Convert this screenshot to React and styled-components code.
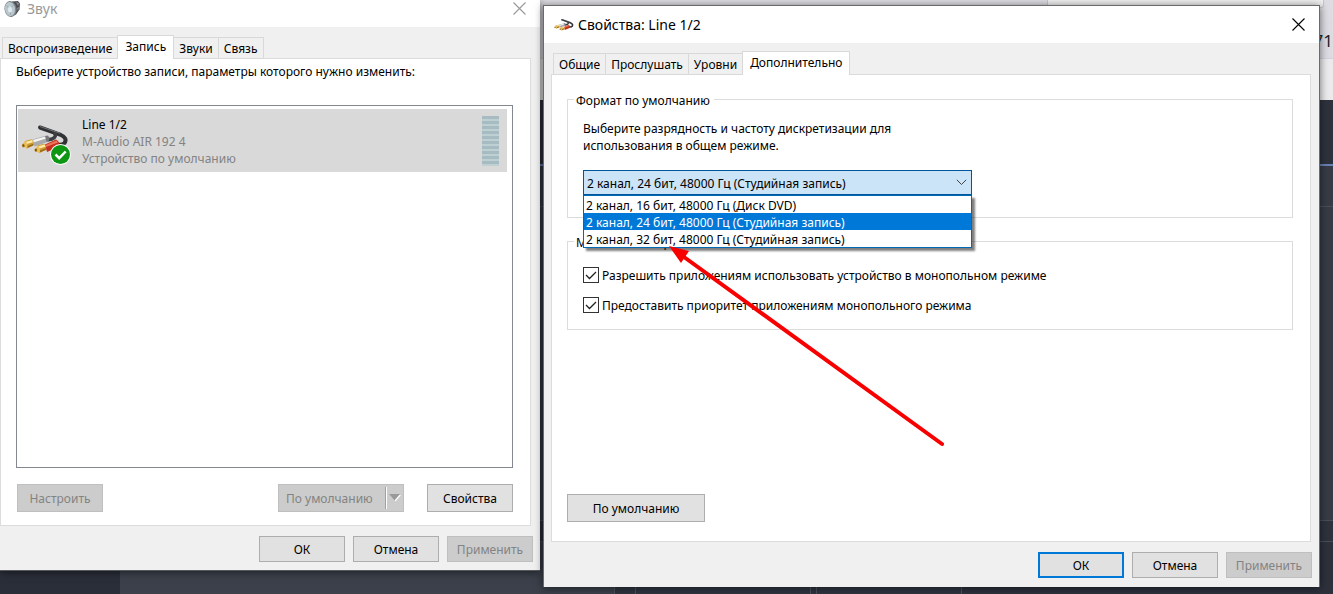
import React, { useState } from 'react';
import styled, { createGlobalStyle, css } from 'styled-components';

const GlobalStyle = createGlobalStyle`
  *, *::before, *::after { box-sizing: border-box; }
  body {
    margin: 0;
    font-family: "Noto Sans", "Open Sans", sans-serif;
    font-size: 12px;
    line-height: 17px;
    color: #000;
  }
  button, select, input { font: inherit; color: inherit; }
`;

const Desktop = styled.main`
  position: relative;
  display: flex;
  align-items: flex-start;
  gap: 3px;
  min-height: 100vh;
  padding-right: 13px;
  overflow: hidden;
`;

/* ---------- application behind the dialogs ---------- */

const Backdrop = styled.div`
  position: absolute;
  inset: 0;
  display: flex;
  flex-direction: column;
  background: #2e323d;
`;

const Strip = styled.div`
  flex: ${(p) => (p.$grow ? 1 : 'none')};
  height: ${(p) => p.$height}px;
  background: ${(p) => p.$color};
  border-bottom: ${(p) => (p.$line ? `1px solid ${p.$line}` : 'none')};
`;

const ToolStrip = styled(Strip)`
  display: flex;
  justify-content: flex-end;
  align-items: center;
  padding-top: 4px;
  font-size: 17px;
  color: #222;
`;

const SearchStrip = styled(Strip)`
  display: flex;
  justify-content: flex-end;
  padding-right: 9px;
`;

const SearchBox = styled.div`
  width: 277px;
  height: 8px;
  background: #f0f0f1;
  border: 1px solid #c8c7cd;
  border-top: 0;
  border-radius: 0 0 3px 3px;
`;

const BottomStrip = styled(Strip)`
  display: flex;
`;

const BottomCell = styled.div`
  flex: ${(p) => (p.$width ? `0 0 ${p.$width}px` : 1)};
  background: ${(p) => p.$color};
  border-right: ${(p) => (p.$width && p.$line ? '1px solid #4b505a' : 'none')};
`;

/* ---------- window frame ---------- */

const Window = styled.section`
  position: relative;
  display: flex;
  flex-direction: column;
  background: #f0f0f0;
  box-shadow: 0 1px 8px rgba(0, 0, 0, 0.55);
`;

const SoundWindow = styled(Window)`
  flex: 0 1 540px;
  min-height: calc(100vh - 23px);
  border-bottom: 1px solid #55585c;
`;

const PropertiesWindow = styled(Window)`
  flex: 1;
  margin-top: 5px;
  min-height: calc(100vh - 12px);
  border: 1px solid #6a6a6c;
  border-width: 1px 1px 0 1px;
`;

const TitleBar = styled.header`
  display: flex;
  align-items: center;
  height: ${(p) => (p.$clipped ? 27 : 37)}px;
  padding: ${(p) => (p.$clipped ? '0 14px 10px 4px' : '0 14px 0 10px')};
  gap: ${(p) => (p.$clipped ? 6 : 4)}px;
  background: #fff;
  color: ${(p) => (p.$clipped ? '#999' : '#000')};
`;

const Title = styled.h1`
  flex: 1;
  margin: 0;
  font-size: 14px;
  line-height: 18px;
  font-weight: 400;
`;

const CloseButton = styled.button`
  display: flex;
  padding: 0;
  border: 0;
  background: none;
  color: inherit;
`;

const TabList = styled.div`
  display: flex;
  align-items: flex-end;
  height: ${(p) => p.$height}px;
  padding-left: ${(p) => p.$inset}px;
`;

const Tab = styled.button`
  position: relative;
  height: 22px;
  margin-right: -1px;
  margin-bottom: -1px;
  padding: 0 5px;
  border: 1px solid #d9d9d9;
  background: #f0f0f0;
  white-space: nowrap;
  ${(p) =>
    p.$active &&
    css`
      z-index: 1;
      height: 24px;
      padding: 0 7px 3px;
      border-bottom: 0;
      background: #fff;
    `}
`;

const SoundPanel = styled.div`
  flex: 1;
  display: flex;
  flex-direction: column;
  margin-right: 9px;
  padding: 4px 17px 13px 15px;
  border: 1px solid #dcdcdc;
  background: #fff;
`;

const PropertiesPanel = styled.div`
  flex: 1;
  display: flex;
  flex-direction: column;
  align-items: stretch;
  gap: 14px;
  margin: 0 8px 0 7px;
  padding: 15px 17px 19px 15px;
  border: 1px solid #dcdcdc;
  background: #fff;
`;

const Text = styled.p`
  margin: 0;
`;

/* ---------- buttons ---------- */

const Button = styled.button`
  min-width: 86px;
  height: ${(p) => (p.$tall ? 28 : 26)}px;
  padding: 0 8px;
  border: ${(p) => (p.$primary ? '2px solid #0078d7' : '1px solid #adadad')};
  background: #e1e1e1;
  white-space: nowrap;
  &:disabled {
    border-color: #bfbfbf;
    background: #ccc;
    color: #838383;
  }
`;

const WideButton = styled(Button)`
  align-self: flex-start;
  width: 138px;
  margin-top: auto;
`;

const SplitButton = styled(Button)`
  display: flex;
  align-items: center;
  justify-content: space-between;
  width: 126px;
  margin-left: auto;
  padding: 0 2px 0 7px;
`;

const SplitArrow = styled.span`
  display: flex;
  align-items: center;
  height: 22px;
  padding-left: 2px;
  border-left: 1px solid #a0a0a0;
  box-shadow: inset 1px 0 #fff;
`;

const PanelActions = styled.div`
  display: flex;
  gap: 23px;
  margin-top: 16px;
  padding-left: 1px;
`;

const Footer = styled.footer`
  display: flex;
  justify-content: flex-end;
  gap: 8px;
  padding: 10px 7px ${(p) => p.$bottom}px;
`;

/* ---------- device list ---------- */

const DeviceList = styled.ul`
  flex: 1;
  margin: 25px 0 0;
  padding: 3px 5px 3px 1px;
  border: 1px solid #828790;
  list-style: none;
`;

const Device = styled.li`
  display: flex;
  align-items: center;
  height: 63px;
  padding: 0 8px 0 3px;
  background: #d9d9d9;
`;

const DeviceText = styled.div`
  flex: 1;
  padding: 2px 0 0 11px;
  color: #838383;
`;

const DeviceName = styled.div`
  color: #000;
`;

const Meter = styled.div`
  display: flex;
  flex-direction: column;
  width: 17px;
`;

const MeterBar = styled.span`
  height: 5px;
  background: #a6bcc2;
  border-bottom: 2px solid #bfd0d3;
`;

/* ---------- properties form ---------- */

const Group = styled.fieldset`
  min-width: 0;
  margin: 0;
  padding: ${(p) => p.$padding};
  border: 1px solid #dcdcdc;
`;

const Legend = styled.legend`
  margin-left: ${(p) => p.$inset}px;
  padding: 2px 4px 0 2px;
`;

const Hint = styled(Text)`
  max-width: 340px;
`;

const Combo = styled.div`
  position: relative;
  max-width: 389px;
  margin-top: 16px;
`;

const ComboSelect = styled.select`
  display: block;
  width: 100%;
  height: 25px;
  padding: 2px 24px 0 3px;
  border: 1px solid #00559b;
  border-radius: 0;
  background: #cce4f7;
  appearance: none;
  outline: 0;
`;

const ComboChevron = styled.svg`
  position: absolute;
  right: 5px;
  top: 9px;
  pointer-events: none;
`;

const Options = styled.ul`
  position: absolute;
  z-index: 2;
  top: 100%;
  left: 0;
  right: 0;
  margin: 0;
  padding: 0;
  border: 1px solid #0069b4;
  background: #fff;
  box-shadow: 3px 3px 2px rgba(0, 0, 0, 0.5);
  list-style: none;
`;

const Option = styled.li`
  padding: 2px 0 0 2px;
  line-height: 15px;
  background: ${(p) => (p.$selected ? '#0078d7' : '#fff')};
  color: ${(p) => (p.$selected ? '#fff' : '#000')};
`;

const CheckRow = styled.label`
  display: flex;
  align-items: flex-start;
  gap: 3px;
  height: 16px;
  line-height: 18px;
  & + & { margin-top: 14px; }
`;

const CheckMark = styled.span`
  display: grid;
`;

const CheckInput = styled.input`
  grid-area: 1 / 1;
  width: 16px;
  height: 16px;
  margin: 0;
  border: 1px solid #333;
  background: #fff;
  appearance: none;
  &:not(:checked) + svg { visibility: hidden; }
`;

const CheckIcon = styled.svg`
  grid-area: 1 / 1;
  pointer-events: none;
`;

const Pointer = styled.svg`
  position: absolute;
  z-index: 3;
  left: 120px;
  top: 234px;
  pointer-events: none;
`;

/* ---------- drawings ---------- */

function CloseIcon({ size }) {
  return (
    <svg width={size} height={size} viewBox="0 0 13 13" fill="none" stroke="currentColor" strokeWidth="1.1">
      <path d="M.5.5l12 12M12.5.5l-12 12" />
    </svg>
  );
}

function SpeakerIcon() {
  return (
    <svg width="17" height="18" viewBox="0 0 17 18">
      <path d="M8 1.500L14 1l2 2.500-.5 6-3.500 5-4 2z" fill="#4a4c50" />
      <path d="M12 2l3 1-1 3zM13 8l2-1-1 4z" fill="#8b8e92" />
      <ellipse cx="6.500" cy="9" rx="6" ry="8" fill="#7c858b" transform="rotate(-8 6.500 9)" />
      <ellipse cx="6" cy="9" rx="5" ry="7" fill="#b9c7ce" transform="rotate(-8 6 9)" />
      <path d="M2.500 6l3.500 3 .5 6M6 9l3.500-4" stroke="#98a6ae" fill="none" />
      <ellipse cx="6" cy="9.500" rx="2" ry="3" fill="#dfe9ed" />
    </svg>
  );
}

function Plug() {
  return (
    <>
      <path d="M1 7.500Q.5 5.500 2.500 5L5 4.500l1 3-3.500 1.500Q1.300 9 1 7.500z" fill="#c08a22" />
      <path d="M4 2.500L10.500.8Q13 3 12.500 7L6 10Q3 7 4 2.500z" fill="#cf9a2f" />
      <path d="M5 3.200l6-1.700 1 2.200-7 2z" fill="#ffe9a6" />
      <path d="M6 9.600l6.300-2.900.2-1.500L5.500 8z" fill="#946717" />
      <ellipse cx="4.800" cy="6.200" rx="1.500" ry="3.800" fill="#e9bf5c" transform="rotate(-12 4.800 6.200)" />
      <circle cx="2.400" cy="7" r="1" fill="#6e4c10" />
    </>
  );
}

function CablesDrawing() {
  return (
    <>
      <path d="M19 3.500L39 10.500Q47 14 43.500 19Q41.500 21.500 36 20.500" fill="none" stroke="#303234" strokeWidth="4" strokeLinecap="round" />
      <path d="M33 8.500Q36.500 12.500 31 15L26 16" fill="none" stroke="#3b3d40" strokeWidth="3.500" />
      <path d="M19 2.500L39 9.300" stroke="#6e7174" strokeWidth="1" fill="none" />
      <path d="M11.500 15.500L24.500 11.800Q28 14 26.500 18L13.500 22.500z" fill="#aaaaac" />
      <path d="M12 16l12.500-3.500 1.500 1.800-13 4z" fill="#f4f4f5" />
      <path d="M24 12l3-.5q2.500 3 .5 5.500l-2 1z" fill="#77797c" />
      <g transform="translate(0 14.500)"><Plug /></g>
      <path d="M24 20.500L35 15.500Q39.500 17.500 37.500 23L26 28z" fill="#c4301b" />
      <path d="M24.500 21l11-4.500 1.500 2L25 23z" fill="#ee7259" />
      <g transform="translate(12.500 19)"><Plug /></g>
    </>
  );
}

function DeviceIcon() {
  return (
    <svg width="50" height="50" viewBox="0 -8 50 50">
      <CablesDrawing />
      <circle cx="39.500" cy="30.500" r="10.500" fill="#fff" />
      <circle cx="39.500" cy="30.500" r="9.500" fill="#0c9612" />
      <path d="M34.500 30.500l3.700 3.700 6.500-6.700" stroke="#fff" strokeWidth="2.500" fill="none" />
    </svg>
  );
}

function SmallCablesIcon() {
  return (
    <svg width="20" height="14" viewBox="0 0 48 32">
      <CablesDrawing />
    </svg>
  );
}

/* ---------- data ---------- */

const FORMATS = [
  '2 канал, 16 бит, 48000 Гц (Диск DVD)',
  '2 канал, 24 бит, 48000 Гц (Студийная запись)',
  '2 канал, 32 бит, 48000 Гц (Студийная запись)',
];

function Tabs({ names, active, height, inset }) {
  return (
    <TabList role="tablist" $height={height} $inset={inset}>
      {names.map((name) => (
        <Tab key={name} type="button" role="tab" aria-selected={name === active} $active={name === active}>
          {name}
        </Tab>
      ))}
    </TabList>
  );
}

function CheckBox({ children }) {
  return (
    <CheckRow>
      <CheckMark>
        <CheckInput type="checkbox" defaultChecked />
        <CheckIcon width="16" height="16" viewBox="0 0 16 16" fill="none" stroke="#222" strokeWidth="1.300">
          <path d="M3 8l3.500 3.500L13 5" />
        </CheckIcon>
      </CheckMark>
      {children}
    </CheckRow>
  );
}

function SoundDialog() {
  return (
    <SoundWindow aria-label="Звук">
      <TitleBar $clipped>
        <SpeakerIcon />
        <Title>Звук</Title>
        <CloseButton type="button" aria-label="Закрыть"><CloseIcon size={13} /></CloseButton>
      </TitleBar>
      <Tabs names={['Воспроизведение', 'Запись', 'Звуки', 'Связь']} active="Запись" height={31} inset={2} />
      <SoundPanel>
        <Text>Выберите устройство записи, параметры которого нужно изменить:</Text>
        <DeviceList>
          <Device>
            <DeviceIcon />
            <DeviceText>
              <DeviceName>Line 1/2</DeviceName>
              <div>M-Audio AIR 192 4</div>
              <div>Устройство по умолчанию</div>
            </DeviceText>
            <Meter>
              {Array.from({ length: 10 }, (_, i) => <MeterBar key={i} />)}
            </Meter>
          </Device>
        </DeviceList>
        <PanelActions>
          <Button type="button" $tall disabled>Настроить</Button>
          <SplitButton type="button" $tall disabled>
            По умолчанию
            <SplitArrow>
              <svg width="13" height="8" viewBox="0 0 13 8">
                <path d="M2 1h11L7.500 7.500z" fill="#fff" />
                <path d="M1 0h11L6.500 6.500z" fill="#999" />
              </svg>
            </SplitArrow>
          </SplitButton>
          <Button type="button" $tall>Свойства</Button>
        </PanelActions>
      </SoundPanel>
      <Footer $bottom={8}>
        <Button type="button">ОК</Button>
        <Button type="button">Отмена</Button>
        <Button type="button" disabled>Применить</Button>
      </Footer>
    </SoundWindow>
  );
}

function PropertiesDialog() {
  const [format, setFormat] = useState(FORMATS[1]);
  return (
    <PropertiesWindow aria-label="Свойства: Line 1/2">
      <TitleBar>
        <SmallCablesIcon />
        <Title>Свойства: Line 1/2</Title>
        <CloseButton type="button" aria-label="Закрыть"><CloseIcon size={13} /></CloseButton>
      </TitleBar>
      <Tabs names={['Общие', 'Прослушать', 'Уровни', 'Дополнительно']} active="Дополнительно" height={31} inset={9} />
      <PropertiesPanel>
        <Group $padding="11px 15px 22px">
          <Legend $inset={-9}>Формат по умолчанию</Legend>
          <Hint>Выберите разрядность и частоту дискретизации для использования в общем режиме.</Hint>
          <Combo>
            <ComboSelect aria-label="Формат по умолчанию" value={format} onChange={(e) => setFormat(e.target.value)}>
              {FORMATS.map((f) => <option key={f}>{f}</option>)}
            </ComboSelect>
            <ComboChevron width="11" height="7" viewBox="0 0 11 7" fill="none" stroke="#444">
              <path d="M.8.8l4.700 4.700L10.200.8" />
            </ComboChevron>
            <Options role="listbox" aria-label="Формат по умолчанию">
              {FORMATS.map((f) => (
                <Option key={f} role="option" aria-selected={f === format} $selected={f === format} onClick={() => setFormat(f)}>
                  {f}
                </Option>
              ))}
            </Options>
          </Combo>
        </Group>
        <Group $padding="16px 15px 16px">
          <Legend $inset={-9}>Монопольный режим</Legend>
          <CheckBox>Разрешить приложениям использовать устройство в монопольном режиме</CheckBox>
          <CheckBox>Предоставить приоритет приложениям монопольного режима</CheckBox>
        </Group>
        <WideButton type="button" $tall>По умолчанию</WideButton>
      </PropertiesPanel>
      <Footer $bottom={9}>
        <Button type="button" $primary>ОК</Button>
        <Button type="button">Отмена</Button>
        <Button type="button" disabled>Применить</Button>
      </Footer>
      <Pointer width="290" height="215" viewBox="664 240 290 215">
        <path d="M684 257L942 444" stroke="#f80000" strokeWidth="4" strokeLinecap="round" />
        <path d="M669 246L681 263L689 251z" fill="#f80000" />
      </Pointer>
    </PropertiesWindow>
  );
}

export default function App() {
  return (
    <>
      <GlobalStyle />
      <Desktop>
        <Backdrop>
          <SearchStrip $height={19} $color="#dedde3"><SearchBox /></SearchStrip>
          <ToolStrip $height={40} $color="#dddce3" $line="#d3d2d8">71</ToolStrip>
          <Strip $height={41} $color="#ebebee" />
          <Strip $height={64} $color="#2e323d" />
          <Strip $height={2} $color="#6a7fb5" />
          <Strip $height={41} $color="#363b45" $line="#4a4e58" />
          <Strip $grow $color="#363b45" $line="#4a4e58" />
          <Strip $height={21} $color="#2e323d" $line="#4a4e58" />
          <BottomStrip $height={52} $color="#2d313c">
            <BottomCell $width={120} $color="#2a2e39" />
            <BottomCell $width={495} $color="#3b404a" $line />
            <BottomCell $width={21} $color="#2f343f" $line />
            <BottomCell $width={175} $color="#2f343f" $line />
            <BottomCell $width={6} $color="#2f343f" $line />
            <BottomCell $width={145} $color="#2f343f" $line />
            <BottomCell $color="#2d313c" />
          </BottomStrip>
        </Backdrop>
        <SoundDialog />
        <PropertiesDialog />
      </Desktop>
    </>
  );
}
